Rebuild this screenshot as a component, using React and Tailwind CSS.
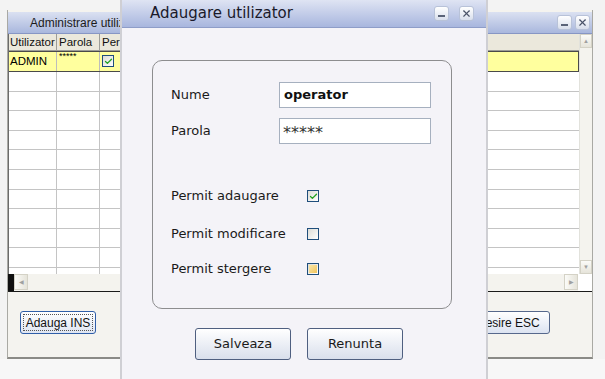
import { Check, X } from "lucide-react";

const rows = Array.from({ length: 11 });

const TitleButton = ({ kind }) => (
  <div className="w-[15px] h-[15px] rounded-[3px] border border-[#b8c2d8] bg-gradient-to-b from-[#ffffff] to-[#d9dfec] flex items-end justify-center">
    {kind === "min" ? (
      <div className="w-[7px] h-[2px] bg-[#5a6378] mb-[3px]" />
    ) : (
      <X size={11} strokeWidth={2.5} className="text-[#4a5368] self-center" />
    )}
  </div>
);

const CheckBox = ({ checked, hover }) => (
  <div className="w-[12px] h-[12px] border border-[#1f4e7c] bg-gradient-to-br from-[#dcdcd6] to-[#ffffff] flex items-center justify-center">
    {checked && <Check size={9} strokeWidth={3.5} className="text-[#21a121]" />}
    {hover && (
      <div className="w-[8px] h-[8px] bg-gradient-to-br from-[#f9e7a8] to-[#f0c45a]" />
    )}
  </div>
);

const BackWindow = () => (
  <div className="absolute left-[7px] top-[10px] w-[586px] h-[349px] border-l border-r border-[#a9a9a4] border-b-2 border-b-[#8a8a86] bg-[#f4f3ef] flex flex-col">
    {/* title */}
    <div className="mt-[2px] h-[22px] bg-gradient-to-b from-[#dbe1f1] to-[#a9b7dd] border-b border-[#8796c4] flex items-center pl-[22px] pr-[2px]">
      <span className="text-[12px] text-[#1b1b1b]">Administrare utilizatori</span>
      <div className="ml-auto flex gap-[3px]">
        <TitleButton kind="min" />
        <TitleButton kind="close" />
      </div>
    </div>
    {/* grid */}
    <div className="flex flex-col h-[258px] border-b border-[#1a1a1a]">
      <div className="flex h-[240px]">
        <div className="flex-1 flex flex-col overflow-hidden bg-white border-l border-[#6b6b6b]">
          <div className="flex h-[17px] bg-[#ebe8dc] border-b border-[#9d9d98] text-[11.5px] leading-[16px] text-[#111] shrink-0">
            <div className="w-[48px] border-r border-[#9d9d98] pl-[1px]">Utilizator</div>
            <div className="w-[43px] border-r border-[#9d9d98] pl-[2px]">Parola</div>
            <div className="flex-1 pl-[2px]">Permit adaugare</div>
          </div>
          <div className="flex h-[21px] bg-[#ffff9e] border-y border-[#4a4a4a] border-r text-[11.5px] shrink-0">
            <div className="w-[48px] border-r border-[#bdbdbd] pl-[1px] leading-[19px]">ADMIN</div>
            <div className="w-[43px] border-r border-[#bdbdbd] pl-[2px] text-[9px] leading-[8px]">*****</div>
            <div className="flex-1 pl-[2px] pt-[3px]">
              <CheckBox checked />
            </div>
          </div>
          {rows.map((_, i) => (
            <div key={i} className="flex h-[19.6px] border-b border-[#c4c4c4] shrink-0">
              <div className="w-[48px] border-r border-[#c4c4c4]" />
              <div className="w-[43px] border-r border-[#c4c4c4]" />
              <div className="flex-1" />
            </div>
          ))}
        </div>
        <div className="w-[13px] bg-[#f4f3ee] flex flex-col justify-between border-l border-[#e2e2dc]">
          <div className="h-[14px] bg-gradient-to-b from-[#fbfbf8] to-[#e6e4da] border border-[#d4d2c6] flex items-center justify-center text-[6px] text-[#a0a0a0]">▲</div>
          <div className="h-[14px] bg-gradient-to-b from-[#fbfbf8] to-[#e6e4da] border border-[#d4d2c6] flex items-center justify-center text-[6px] text-[#a0a0a0]">▼</div>
        </div>
      </div>
      <div className="flex h-[17px] bg-[#f4f3ee]">
        <div className="w-[6px] bg-[#111]" />
        <div className="w-[14px] h-[16px] bg-gradient-to-r from-[#fbfbf8] to-[#e6e4da] border border-[#d4d2c6] flex items-center justify-center text-[6px] text-[#a0a0a0]">◀</div>
        <div className="flex-1" />
        <div className="w-[14px] h-[16px] bg-gradient-to-r from-[#fbfbf8] to-[#e6e4da] border border-[#d4d2c6] flex items-center justify-center text-[6px] text-[#a0a0a0]">▶</div>
        <div className="w-[14px] bg-white" />
      </div>
    </div>
    {/* buttons */}
    <div className="flex justify-between mt-[19px] pl-[12px] pr-[42px]">
      <div className="w-[76px] h-[23px] rounded-[3px] border border-[#2f5ea8] bg-gradient-to-b from-[#ffffff] to-[#dfe5f2] p-[2px]">
        <div className="w-full h-full border border-dotted border-[#555] flex items-center justify-center text-[12px] text-[#111]">
          Adauga INS
        </div>
      </div>
      <div className="w-[78px] h-[23px] rounded-[3px] border border-[#56688c] bg-gradient-to-b from-[#ffffff] to-[#dce3f1] flex items-center justify-center text-[12px] text-[#111]">
        Iesire ESC
      </div>
    </div>
  </div>
);

const Dialog = () => (
  <div className="absolute left-[120px] top-0 w-[368px] h-[379px] bg-[#f4f3f8] border-l-2 border-r-2 border-[#cfcfd4] flex flex-col font-['DejaVu_Sans',sans-serif]">
    <div className="h-[28px] bg-gradient-to-b from-[#dfe4f3] to-[#a8b6de] border-b border-[#8e9dc8] flex items-center pl-[28px] pr-[12px]">
      <span className="text-[15px] text-[#1a1a2a]">Adaugare utilizator</span>
      <div className="ml-auto flex gap-[10px]">
        <TitleButton kind="min" />
        <TitleButton kind="close" />
      </div>
    </div>
    <div className="pt-[32px] pl-[30px]">
      <div className="w-[300px] h-[249px] rounded-[10px] border border-[#8d8d8f] pt-[21px] pl-[18px] flex flex-col text-[13px] text-[#1a1a1a]">
        <div className="flex items-center h-[26px]">
          <span className="w-[108px]">Nume</span>
          <div className="w-[152px] h-[26px] border border-[#a6b0bf] bg-white flex items-center pl-[4px] text-[13px] font-bold text-[#111]">
            operator
          </div>
        </div>
        <div className="flex items-center h-[26px] mt-[10px]">
          <span className="w-[108px]">Parola</span>
          <div className="w-[152px] h-[26px] border border-[#a6b0bf] bg-white flex items-center pl-[3px] pt-[3px] text-[16px] text-[#333]">
            *****
          </div>
        </div>
        <div className="flex items-center h-[20px] mt-[42px]">
          <span className="w-[136px]">Permit adaugare</span>
          <CheckBox checked />
        </div>
        <div className="flex items-center h-[20px] mt-[18px]">
          <span className="w-[136px]">Permit modificare</span>
          <CheckBox />
        </div>
        <div className="flex items-center h-[20px] mt-[15px]">
          <span className="w-[136px]">Permit stergere</span>
          <CheckBox hover />
        </div>
      </div>
    </div>
    <div className="flex gap-[16px] pl-[73px] mt-[19px]">
      <div className="w-[96px] h-[32px] rounded-[3px] border border-[#4f5f80] bg-gradient-to-b from-[#ffffff] to-[#d9dfec] flex items-center justify-center text-[13px] text-[#1a1a1a]">
        Salveaza
      </div>
      <div className="w-[96px] h-[32px] rounded-[3px] border border-[#4f5f80] bg-gradient-to-b from-[#ffffff] to-[#d9dfec] flex items-center justify-center text-[13px] text-[#1a1a1a]">
        Renunta
      </div>
    </div>
  </div>
);

export default function App() {
  return (
    <div className="relative w-[605px] h-[379px] overflow-hidden bg-[#f3f3f3] font-['Liberation_Sans',sans-serif]">
      <div className="absolute left-0 top-[359px] w-full h-[20px] bg-[#f7f7f7]" />
      <BackWindow />
      <Dialog />
    </div>
  );
}
